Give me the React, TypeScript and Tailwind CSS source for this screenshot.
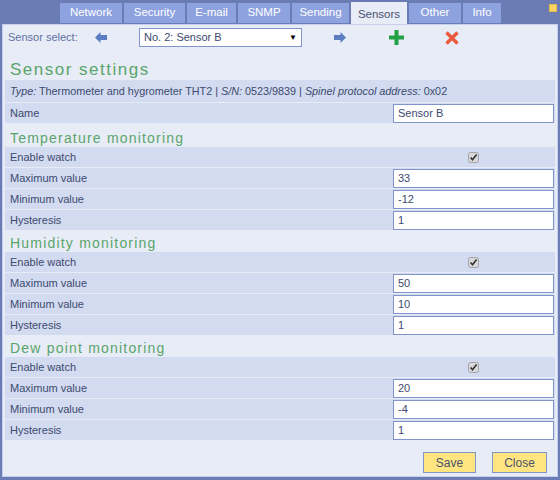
import React from 'react';

const TABS = [
  { label: 'Network', w: 'w-[62px]' },
  { label: 'Security', w: 'w-[61px]' },
  { label: 'E-mail', w: 'w-[49px]' },
  { label: 'SNMP', w: 'w-[52px]' },
  { label: 'Sending', w: 'w-[57px]' },
  { label: 'Sensors', w: 'w-[56px]', active: true },
  { label: 'Other', w: 'w-[52px]' },
  { label: 'Info', w: 'w-[38px]' },
];

const SECTIONS = [
  { title: 'Temperature monitoring', max: '33', min: '-12', hyst: '1', tall: true },
  { title: 'Humidity monitoring', max: '50', min: '10', hyst: '1' },
  { title: 'Dew point monitoring', max: '20', min: '-4', hyst: '1' },
];

const Arrow = ({ dir }: { dir: 'left' | 'right' }) => (
  <svg width="12" height="11" viewBox="0 0 12 11" className={dir === 'right' ? 'scale-x-[-1]' : ''}>
    <polygon points="0,5.5 5.5,0 5.5,3 12,3 12,8 5.5,8 5.5,11" fill="#5b7dc2" />
  </svg>
);

const Checkbox = () => (
  <svg width="11" height="11" viewBox="0 0 11 11">
    <rect x="0.5" y="0.5" width="10" height="10" rx="2" fill="#d9d9dc" stroke="#a3a3a8" />
    <path d="M2.6 5.6 L4.5 7.8 L8.6 2.6" fill="none" stroke="#333" strokeWidth="1.6" />
  </svg>
);

const TextInput = ({ value }: { value: string }) => (
  <div className="w-[161px] h-[19px] bg-white border border-[#8094c9] px-[4px] flex items-center text-[11px] text-[#3d4a6f]">
    {value}
  </div>
);

const Row = ({ label, children, h = 'h-[20px]' }: { label: string; children?: React.ReactNode; h?: string }) => (
  <div className={`${h} bg-[#d2dbf0] flex items-center text-[11px] text-[#3d4a6f]`}>
    <div className="pl-[5px] w-[387px] shrink-0">{label}</div>
    <div className="flex-1 flex justify-center items-center">{children}</div>
  </div>
);

export default function App() {
  return (
    <div
      className="w-[560px] h-[480px] bg-[#6b7cb4] relative overflow-hidden"
      style={{ fontFamily: '"Liberation Sans", Arial, sans-serif' }}
    >
      <div className="absolute left-[549px] top-[4px] w-[8px] h-[8px] bg-[#f6d466] border border-[#e5b84a]" />
      <div className="h-[24px] pl-[60px] flex items-end gap-[2px]">
        {TABS.map((t) =>
          t.active ? (
            <div
              key={t.label}
              className={`${t.w} h-[22px] bg-[#e8ecf7] text-[#4a5270] text-[11.5px] flex items-center justify-center pt-[3px]`}
            >
              {t.label}
            </div>
          ) : (
            <div
              key={t.label}
              className={`${t.w} h-[20px] mb-[1px] bg-[#8ea2df] text-white text-[11.5px] flex items-center justify-center`}
            >
              {t.label}
            </div>
          )
        )}
      </div>
      <div className="ml-[2px] w-[556px] h-[453px] bg-[#e8ecf7] border border-[#c6d0ec] px-[2px] flex flex-col">
        <div className="h-[21px] mt-[2px] flex items-center text-[11px] text-[#6171a3]">
          <div className="w-[90px] pl-[3px]">Sensor select:</div>
          <Arrow dir="left" />
          <div className="ml-[32px] w-[163px] h-[19px] bg-white border border-[#8094c9] flex items-center justify-between px-[4px] text-[#3d4a6f]">
            <span>No. 2: Sensor B</span>
            <span className="text-[8px] text-black">▼</span>
          </div>
          <div className="ml-[32px]">
            <Arrow dir="right" />
          </div>
          <svg width="15" height="15" viewBox="0 0 15 15" className="ml-[43px]">
            <rect x="5.5" y="0" width="4" height="15" fill="#22a245" />
            <rect x="0" y="5.5" width="15" height="4" fill="#22a245" />
          </svg>
          <svg width="14" height="14" viewBox="0 0 14 14" className="ml-[41px]">
            <path d="M1.5 1.5 L12.5 12.5 M12.5 1.5 L1.5 12.5" stroke="#ea5a3c" strokeWidth="3.4" />
          </svg>
        </div>
        <div className="h-[32px] flex items-end pl-[5px] text-[17px] leading-[20px] tracking-[1.5px] text-[#5aa56b]">
          Sensor settings
        </div>
        <div className="flex flex-col gap-px">
          <div className="h-[22px] bg-[#d2dbf0] flex items-center pl-[5px] text-[10.8px] text-[#3d4a6f]">
            <span>
              <i>Type:</i> Thermometer and hygrometer THT2 | <i>S/N:</i> 0523/9839 | <i>Spinel protocol address:</i> 0x02
            </span>
          </div>
          <Row label="Name">
            <TextInput value="Sensor B" />
          </Row>
          {SECTIONS.map((s) => (
            <React.Fragment key={s.title}>
              <div
                className={`${s.tall ? 'h-[22px]' : 'h-[20px]'} flex items-end pl-[5px] text-[14px] leading-[16px] tracking-[1.2px] text-[#5aa56b]`}
              >
                {s.title}
              </div>
              <Row label="Enable watch">
                <Checkbox />
              </Row>
              <Row label="Maximum value">
                <TextInput value={s.max} />
              </Row>
              <Row label="Minimum value">
                <TextInput value={s.min} />
              </Row>
              <Row label="Hysteresis">
                <TextInput value={s.hyst} />
              </Row>
            </React.Fragment>
          ))}
        </div>
        <div className="mt-[12px] flex justify-end gap-[16px] pr-[8px]">
          <button className="w-[53px] h-[21px] bg-[#ffe57f] border border-[#8094c9] text-[12px] text-[#4a5270]">
            Save
          </button>
          <button className="w-[55px] h-[21px] bg-[#ffe57f] border border-[#8094c9] text-[12px] text-[#4a5270]">
            Close
          </button>
        </div>
      </div>
    </div>
  );
}
